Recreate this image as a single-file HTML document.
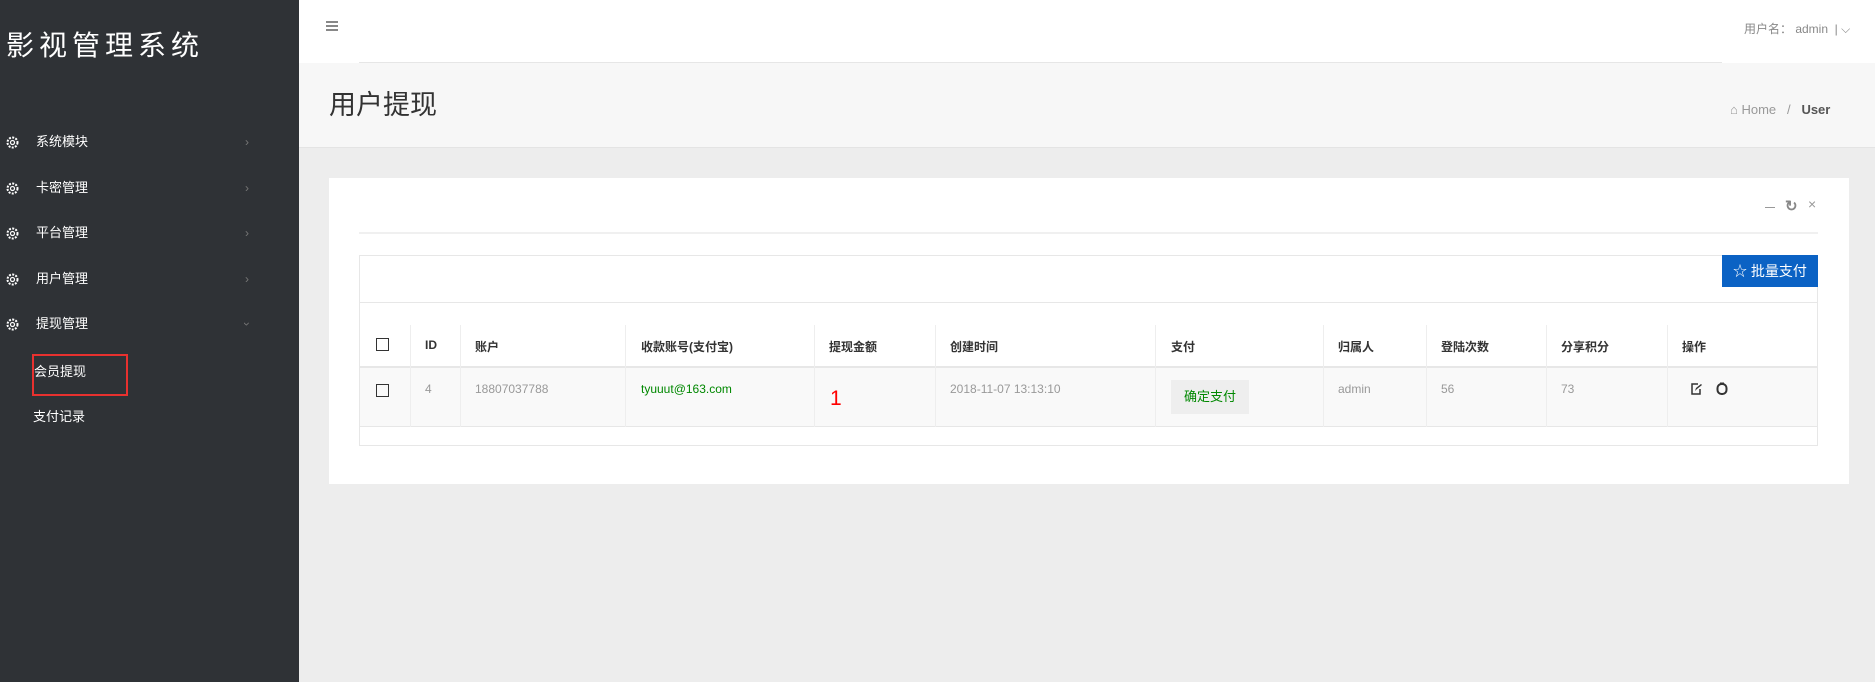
<!DOCTYPE html>
<html><head><meta charset="utf-8"><style>
*{margin:0;padding:0;box-sizing:border-box}
body{width:1875px;height:682px;overflow:hidden;background:#ededed;font-family:"Liberation Sans","Noto Sans CJK SC",sans-serif;position:relative}
.abs{position:absolute}
#side{left:0;top:0;width:299px;height:682px;background:#2f3236}
.title{left:6px;top:24px;color:#fff;font-size:28px;letter-spacing:5px;white-space:nowrap}
.mi{left:0;width:299px;height:20px;color:#fff;font-size:13px;line-height:20px}
.mi .ic{position:absolute;left:6px;top:4px}
.mi .t{position:absolute;left:36px;top:0}
.mi .ch{position:absolute;left:245px;top:0;color:#777;font-size:12px}
.sub{left:34px;color:#fff;font-size:13px}
#hdr{left:299px;top:0;width:1576px;height:63px;background:#fff}
#ph{left:299px;top:63px;width:1576px;height:85px;background:#f7f7f7;border-bottom:1px solid #e4e4e4}
#card{left:329px;top:178px;width:1520px;height:306px;background:#fff}
.th{position:absolute;top:338px;font-size:12px;font-weight:bold;color:#333;white-space:nowrap}
.td{position:absolute;top:382px;font-size:12px;color:#999;white-space:nowrap}
.vl{position:absolute;width:1px;background:#eee}
</style></head><body>
<div id="side" class="abs">
<div class="abs title">影视管理系统</div>
<div class="abs mi" style="top:132px"><svg class="ic" width="13" height="13" viewBox="0 0 13 13"><circle cx="6.5" cy="6.5" r="5" fill="none" stroke="#fff" stroke-width="2" stroke-dasharray="2 1.3"/><circle cx="6.5" cy="6.5" r="2" fill="none" stroke="#fff" stroke-width="1.2"/></svg><span class="t">系统模块</span><span class="ch">›</span></div>
<div class="abs mi" style="top:178px"><svg class="ic" width="13" height="13" viewBox="0 0 13 13"><circle cx="6.5" cy="6.5" r="5" fill="none" stroke="#fff" stroke-width="2" stroke-dasharray="2 1.3"/><circle cx="6.5" cy="6.5" r="2" fill="none" stroke="#fff" stroke-width="1.2"/></svg><span class="t">卡密管理</span><span class="ch">›</span></div>
<div class="abs mi" style="top:223px"><svg class="ic" width="13" height="13" viewBox="0 0 13 13"><circle cx="6.5" cy="6.5" r="5" fill="none" stroke="#fff" stroke-width="2" stroke-dasharray="2 1.3"/><circle cx="6.5" cy="6.5" r="2" fill="none" stroke="#fff" stroke-width="1.2"/></svg><span class="t">平台管理</span><span class="ch">›</span></div>
<div class="abs mi" style="top:269px"><svg class="ic" width="13" height="13" viewBox="0 0 13 13"><circle cx="6.5" cy="6.5" r="5" fill="none" stroke="#fff" stroke-width="2" stroke-dasharray="2 1.3"/><circle cx="6.5" cy="6.5" r="2" fill="none" stroke="#fff" stroke-width="1.2"/></svg><span class="t">用户管理</span><span class="ch">›</span></div>
<div class="abs mi" style="top:314px"><svg class="ic" width="13" height="13" viewBox="0 0 13 13"><circle cx="6.5" cy="6.5" r="5" fill="none" stroke="#fff" stroke-width="2" stroke-dasharray="2 1.3"/><circle cx="6.5" cy="6.5" r="2" fill="none" stroke="#fff" stroke-width="1.2"/></svg><span class="t">提现管理</span><span class="ch" style="transform:rotate(90deg);display:inline-block">›</span></div>
<div class="abs sub" style="top:361px">会员提现</div>
<div class="abs" style="left:32px;top:354px;width:96px;height:42px;border:2px solid #e8312f"></div>
<div class="abs sub" style="top:406px;left:33px">支付记录</div>
</div>
<div id="hdr" class="abs">
<div class="abs" style="left:27px;top:21px;width:12px"><div style="height:2px;background:#888;margin-bottom:2px"></div><div style="height:2px;background:#888;margin-bottom:2px"></div><div style="height:2px;background:#888"></div></div>
<div class="abs" style="left:1445px;top:20px;font-size:12px;color:#888;white-space:nowrap">用户名： admin &nbsp;| ⌵</div>
<div class="abs" style="left:60px;top:62px;width:1363px;height:1px;background:#e6e6e6"></div>
</div>
<div id="ph" class="abs">
<div class="abs" style="left:30px;top:20px;font-size:27px;color:#333">用户提现</div>
<div class="abs" style="left:1431px;top:39px;font-size:13px;color:#999;white-space:nowrap">⌂ Home &nbsp;&nbsp;/ &nbsp;&nbsp;<b style="color:#555">User</b></div>
</div>
<div id="card" class="abs"></div>
<div class="abs" style="left:1765px;top:207px;width:10px;height:1px;background:#999"></div>
<div class="abs" style="left:1785px;top:197px;font-size:15px;color:#888;font-weight:bold">↻</div>
<div class="abs" style="left:1808px;top:196px;font-size:14px;color:#999">×</div>
<div class="abs" style="left:359px;top:232px;width:1459px;height:2px;background:#f0f0f0"></div>
<div class="abs" style="left:359px;top:255px;width:1459px;height:191px;border:1px solid #e7e7e7"></div>
<div class="abs" style="left:1722px;top:255px;width:96px;height:32px;background:#0b62c4;color:#fff;font-size:14px;line-height:32px;text-align:center">☆ 批量支付</div>
<div class="abs" style="left:360px;top:302px;width:1457px;height:1px;background:#e7e7e7"></div>
<div class="abs" style="left:360px;top:366px;width:1457px;height:61px;background:#f9f9f9;border-top:2px solid #e7e7e7;border-bottom:1px solid #e7e7e7"></div>
<div class="vl" style="left:410px;top:325px;height:102px"></div>
<div class="vl" style="left:460px;top:325px;height:102px"></div>
<div class="vl" style="left:625px;top:325px;height:102px"></div>
<div class="vl" style="left:814px;top:325px;height:102px"></div>
<div class="vl" style="left:935px;top:325px;height:102px"></div>
<div class="vl" style="left:1155px;top:325px;height:102px"></div>
<div class="vl" style="left:1323px;top:325px;height:102px"></div>
<div class="vl" style="left:1426px;top:325px;height:102px"></div>
<div class="vl" style="left:1546px;top:325px;height:102px"></div>
<div class="vl" style="left:1667px;top:325px;height:102px"></div>
<div class="abs" style="left:376px;top:338px;width:13px;height:13px;border:1px solid #333"></div>
<div class="abs" style="left:376px;top:384px;width:13px;height:13px;border:1px solid #333"></div>
<span class="th" style="left:425px">ID</span>
<span class="th" style="left:475px">账户</span>
<span class="th" style="left:641px">收款账号(支付宝)</span>
<span class="th" style="left:829px">提现金额</span>
<span class="th" style="left:950px">创建时间</span>
<span class="th" style="left:1171px">支付</span>
<span class="th" style="left:1338px">归属人</span>
<span class="th" style="left:1441px">登陆次数</span>
<span class="th" style="left:1561px">分享积分</span>
<span class="th" style="left:1682px">操作</span>
<span class="td" style="left:425px">4</span>
<span class="td" style="left:475px">18807037788</span>
<span class="td" style="left:641px;color:#080">tyuuut@163.com</span>
<span class="td" style="left:830px;top:387px;color:#f00;font-size:21px">1</span>
<span class="td" style="left:950px">2018-11-07 13:13:10</span>
<div class="abs" style="left:1171px;top:380px;width:78px;height:34px;background:#eee;color:#080;font-size:13px;line-height:34px;text-align:center">确定支付</div>
<span class="td" style="left:1338px">admin</span>
<span class="td" style="left:1441px">56</span>
<span class="td" style="left:1561px">73</span>
<svg class="abs" style="left:1690px;top:383px" width="12" height="12" viewBox="0 0 12 12"><path d="M8 1H2v10h8V6" fill="none" stroke="#333" stroke-width="1.5"/><path d="M5 8l1-3 5-4 1 1-5 4z" fill="#333"/></svg>
<svg class="abs" style="left:1716px;top:382px" width="12" height="13" viewBox="0 0 12 13"><rect x="1.5" y="2" width="9" height="10" rx="4" fill="none" stroke="#333" stroke-width="2"/><rect x="4" y="0.5" width="4" height="2" fill="#333"/></svg>
</body></html>
